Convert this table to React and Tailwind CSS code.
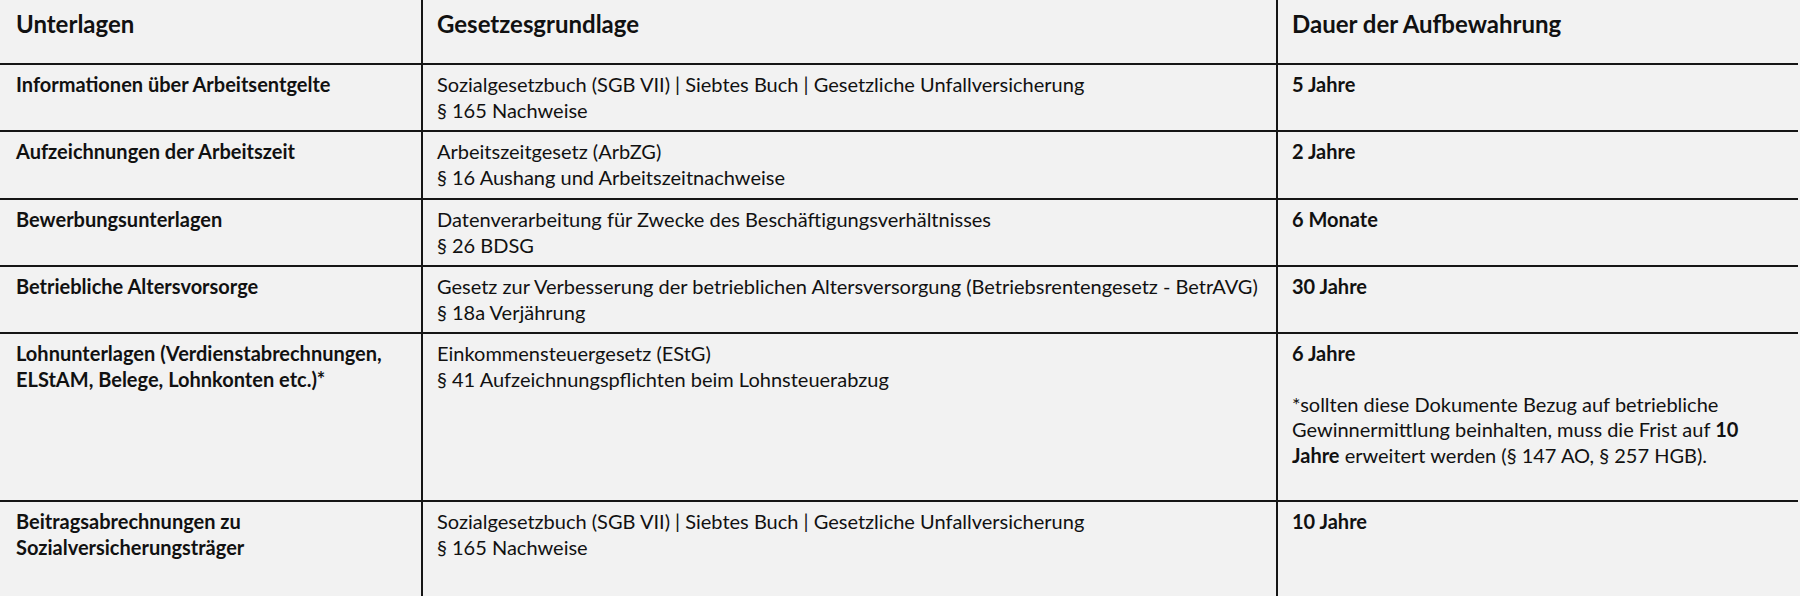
const rows = [
  {
    doc: ['Informationen über Arbeitsentgelte'],
    law: ['Sozialgesetzbuch (SGB VII) | Siebtes Buch | Gesetzliche Unfallversicherung', '§ 165 Nachweise'],
    time: '5 Jahre',
    h: 'h-[67px]',
  },
  {
    doc: ['Aufzeichnungen der Arbeitszeit'],
    law: ['Arbeitszeitgesetz (ArbZG)', '§ 16 Aushang und Arbeitszeitnachweise'],
    time: '2 Jahre',
    h: 'h-[68px]',
  },
  {
    doc: ['Bewerbungsunterlagen'],
    law: ['Datenverarbeitung für Zwecke des Beschäftigungsverhältnisses', '§ 26 BDSG'],
    time: '6 Monate',
    h: 'h-[67px]',
  },
  {
    doc: ['Betriebliche Altersvorsorge'],
    law: ['Gesetz zur Verbesserung der betrieblichen Altersversorgung (Betriebsrentengesetz - BetrAVG)', '§ 18a Verjährung'],
    time: '30 Jahre',
    h: 'h-[67px]',
  },
  {
    doc: ['Lohnunterlagen (Verdienstabrechnungen,', 'ELStAM, Belege, Lohnkonten etc.)*'],
    law: ['Einkommensteuergesetz (EStG)', '§ 41 Aufzeichnungspflichten beim Lohnsteuerabzug'],
    time: '6 Jahre',
    note: true,
    h: 'h-[168px]',
  },
  {
    doc: ['Beitragsabrechnungen zu', 'Sozialversicherungsträger'],
    law: ['Sozialgesetzbuch (SGB VII) | Siebtes Buch | Gesetzliche Unfallversicherung', '§ 165 Nachweise'],
    time: '10 Jahre',
    h: 'h-[94px]',
    last: true,
  },
]

const Row = ({ r }) => {
  return (
    <div className={`grid grid-cols-[423px_855px_520px] ${r.h} ${r.last ? '' : 'border-b-2 border-[#161616]'}`}>
      <div className="border-r-2 border-[#161616] pl-4 pt-[7px] font-bold">
        {r.doc.map((t) => (
          <div key={t} className="whitespace-nowrap">{t}</div>
        ))}
      </div>
      <div className="border-r-2 border-[#161616] pl-[14px] pt-[7px]">
        {r.law.map((t) => (
          <div key={t} className="whitespace-nowrap">{t}</div>
        ))}
      </div>
      <div className="pl-[14px] pt-[7px]">
        <div className="font-bold">{r.time}</div>
        {r.note && (
          <div className="mt-[25px] whitespace-nowrap">
            <div>*sollten diese Dokumente Bezug auf betriebliche</div>
            <div>Gewinnermittlung beinhalten, muss die Frist auf <b>10</b></div>
            <div><b>Jahre</b> erweitert werden (§ 147 AO, § 257 HGB).</div>
          </div>
        )}
      </div>
    </div>
  )
}

const App = () => {
  return (
    <div className="h-[596px] w-[1800px] overflow-hidden bg-[#f2f2f2] text-[#111] font-['Lato',sans-serif] text-[20px] leading-[25.5px]">
      <div className="w-[1798px]">
        <div className="grid grid-cols-[423px_855px_520px] h-[65px] border-b-2 border-[#161616] font-bold text-[24px] leading-[28px]">
          <div className="border-r-2 border-[#161616] pl-4 pt-[10px]">Unterlagen</div>
          <div className="border-r-2 border-[#161616] pl-[14px] pt-[10px]">Gesetzesgrundlage</div>
          <div className="pl-[14px] pt-[10px]">Dauer der Aufbewahrung</div>
        </div>
        {rows.map((r, i) => (
          <Row key={i} r={r} />
        ))}
      </div>
    </div>
  )
}

export default App
